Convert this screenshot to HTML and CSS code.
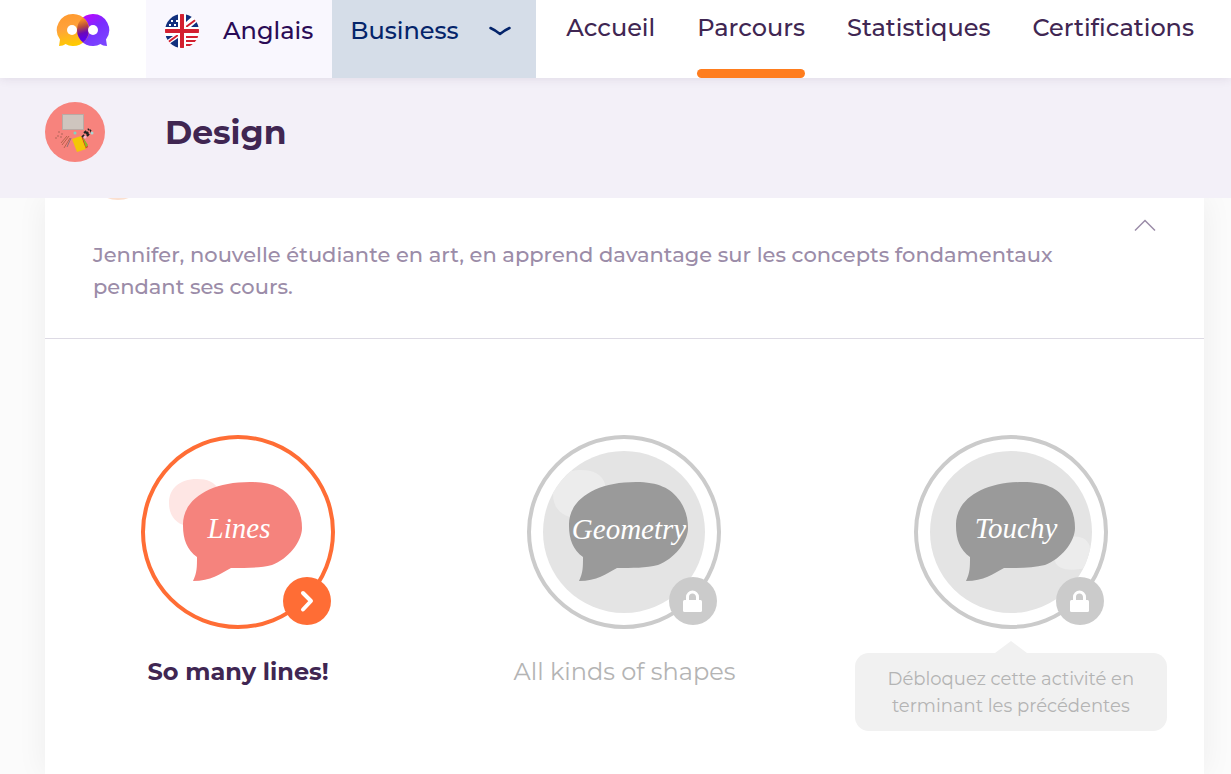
FILE: index.html
```html
<!DOCTYPE html>
<html lang="fr">
<head>
    <meta charset="utf-8">
    <meta name="viewport" content="width=device-width, initial-scale=1">
    <title>Parcours - Design</title>
    <link rel="stylesheet" href="styles.css">
</head>
<body>
    <header class="topbar">
        <a href="#" class="logo" aria-label="Accueil">
            <svg width="54" height="34" viewBox="0 0 54 34">
                <defs>
                    <linearGradient id="orange" x1="0.2" y1="0" x2="0.4" y2="1">
                        <stop offset="0" stop-color="#ff9a2e"/>
                        <stop offset="0.45" stop-color="#ffa23c"/>
                        <stop offset="1" stop-color="#ffcb00"/>
                    </linearGradient>
                    <linearGradient id="purple" x1="0.2" y1="0" x2="0.8" y2="0.9">
                        <stop offset="0" stop-color="#c400ff"/>
                        <stop offset="0.5" stop-color="#7a2cff"/>
                        <stop offset="1" stop-color="#7a44ff"/>
                    </linearGradient>
                    <linearGradient id="overlap" gradientUnits="userSpaceOnUse" x1="23" y1="6" x2="29" y2="26">
                        <stop offset="0" stop-color="#ff9a20"/>
                        <stop offset="0.4" stop-color="#b84a3c"/>
                        <stop offset="0.7" stop-color="#6a08b8"/>
                        <stop offset="1" stop-color="#5c00f0"/>
                    </linearGradient>
                </defs>
                <path fill="url(#purple)" d="M37 1a16 16 0 0 1 13 25.500l1 6.500c-3 0-5-1-6.500-2A16 16 0 1 1 37 1z"/>
                <path fill="url(#orange)" d="M17 1a16 16 0 1 1-7.500 30c-1.500 1-3.500 2-6.500 2l1-6.500A16 16 0 0 1 17 1z"/>
                <path fill="url(#overlap)" d="M27 4.500A16 16 0 0 1 27 29.500A16 16 0 0 1 27 4.500z"/>
                <circle cx="16" cy="17" r="5" fill="#fff"/>
                <circle cx="37" cy="17" r="5" fill="#fff"/>
            </svg>
        </a>
        <button type="button" class="language">
            <svg width="34" height="34" viewBox="0 0 34 34">
                <clipPath id="round"><circle cx="17" cy="17" r="17"/></clipPath>
                <g clip-path="url(#round)">
                    <path fill="#fff" d="M0 0h34v34H0z"/>
                    <path fill="#12307e" d="M0 0h13v13H0zM21 0h9l-9 8zM0 22h8l-7 5zM13 24v10H4v-4z"/>
                    <path stroke="#d32030" stroke-width="2" d="M21 13L33 4M2 29l11-8"/>
                    <path fill="#12307e" d="M34 6v7h-8z"/>
                    <path stroke="#d32030" stroke-width="2" d="M21 23h13M21 27h13M21 31h10"/>
                    <path stroke="#fff" stroke-width="2" stroke-dasharray="2 3" d="M4 11h9M6 7h7"/>
                    <path fill="#fff" d="M13 0h8v34h-8zM0 13h34v8H0z"/>
                    <path fill="#d32030" d="M15 0h4v34h-4zM0 15h34v4H0z"/>
                </g>
            </svg>
            <span>Anglais</span>
        </button>
        <div class="theme">
            <select class="theme-select" aria-label="Thème">
                <option>Business</option>
            </select>
            <svg class="theme-arrow" width="22" height="10" viewBox="0 0 22 10" fill="none" stroke="#04246a" stroke-width="2.500" stroke-linecap="round" stroke-linejoin="round"><path d="M1.500 2Q6 4 11 8Q16 4 20.500 2"/></svg>
        </div>
        <nav class="menu">
            <a href="#">Accueil</a>
            <a href="#" class="active">Parcours</a>
            <a href="#">Statistiques</a>
            <a href="#">Certifications</a>
        </nav>
    </header>

    <div class="chapter">
        <svg width="60" height="60" viewBox="0 0 60 60">
            <circle cx="30" cy="30" r="30" fill="#f7837d"/>
            <path fill="#b9aaa4" d="M17 12h22v16H17z"/>
            <path fill="#cec5be" d="M18 13h20v14H18z"/>
            <path fill="#e32526" d="M36 34l3 3 4 8-3 2z"/>
            <path fill="#86b925" d="M37 34l6 9-2 3z"/>
            <path fill="#f4c707" d="M27 37l9-3 5 13-9 3z"/>
            <path stroke="#b8634c" d="M24 34l-7 9M25 36l-6 10M22 34l-6 7"/>
            <path stroke="#916d78" d="M26 36l-4 9"/>
            <path stroke="#222" stroke-width="2" stroke-dasharray="3 2" d="M37 35l9-7M39 31l5-4M42 34l4-4"/>
            <circle cx="30" cy="31" r="1.500" fill="#81d4c0"/>
            <circle cx="47" cy="31" r="1.500" fill="#a8d8d4"/>
            <circle cx="40" cy="35" r="1.500" fill="#f3b6d0"/>
            <g fill="#c96f66"><circle cx="14" cy="30" r="1"/><circle cx="17" cy="32" r="1"/><circle cx="13" cy="34" r="1"/><circle cx="16" cy="35" r="1"/><circle cx="11" cy="36" r="1"/></g>
        </svg>
        <h1>Design</h1>
    </div>

    <main class="page">
        <section class="panel">
            <div class="panel-header">
                <span class="panel-dot"></span>
                <p>Jennifer, nouvelle étudiante en art, en apprend davantage sur les concepts fondamentaux pendant ses cours.</p>
                <button type="button" class="toggle" aria-label="Réduire">
                    <svg width="22" height="14" viewBox="0 0 22 14" fill="none" stroke="#9b8ca8" stroke-width="1.500"><path d="M1 11.500L11 1.500l10 10"/></svg>
                </button>
            </div>

            <div class="activities">
                <button type="button" class="activity">
                    <svg class="medal" width="194" height="194" viewBox="0 0 194 194">
                        <defs>
                            <path id="bubble" d="M56 122C46 115 42 104 42 91C41 65 68 47 109 47C131 47 144 53 153 66C159 75 161 84 161 93C161 107 147 124 131 130C119 133 105 133 90 133C79 139 70 146 52 146C56 138 56 132 56 122z"/>
                            <g id="lock">
                                <circle cx="166" cy="166" r="24" fill="#cbcbcb"/>
                                <rect x="156" y="165" width="19" height="12" rx="1.500" fill="#fff"/>
                                <path d="M160.500 166v-4a5 5 0 0 1 10 0v4" fill="none" stroke="#fff" stroke-width="3"/>
                            </g>
                            <clipPath id="disc"><circle cx="97" cy="97" r="81"/></clipPath>
                        </defs>
                        <circle cx="97" cy="97" r="95" fill="#fff" stroke="#ff6d35" stroke-width="4"/>
                        <path fill="#fee6e4" d="M28 68C28 54 38 44 56 44C66 44 74 47 78 55C82 66 58 95 45 91C34 88 28 80 28 68z"/>
                        <use href="#bubble" fill="#f5837d"/>
                        <text class="word" x="98" y="103">Lines</text>
                        <circle cx="166" cy="166" r="24" fill="#ff6d35"/>
                        <path d="M162 158l8 8-8 8.500" fill="none" stroke="#fff" stroke-width="4" stroke-linecap="round" stroke-linejoin="round"/>
                    </svg>
                    <span class="name">So many lines!</span>
                </button>

                <button type="button" class="activity locked" disabled>
                    <svg class="medal" width="194" height="194" viewBox="0 0 194 194">
                        <circle cx="97" cy="97" r="95" fill="#fff" stroke="#cbcbcb" stroke-width="4"/>
                        <circle cx="97" cy="97" r="81" fill="#e4e4e4"/>
                        <path clip-path="url(#disc)" fill="#ececec" d="M26 59C26 45 36 35 54 35C66 35 75 39 78 49C80 58 56 86 43 82C32 79 26 71 26 59z"/>
                        <use href="#bubble" fill="#9a9a9a"/>
                        <text class="word" x="102" y="104">Geometry</text>
                        <use href="#lock"/>
                    </svg>
                    <span class="name">All kinds of shapes</span>
                </button>

                <div class="activity-cell">
                    <button type="button" class="activity locked" disabled aria-describedby="hint">
                        <svg class="medal" width="194" height="194" viewBox="0 0 194 194">
                            <circle cx="97" cy="97" r="95" fill="#fff" stroke="#cbcbcb" stroke-width="4"/>
                            <circle cx="97" cy="97" r="81" fill="#e4e4e4"/>
                            <path clip-path="url(#disc)" fill="#ececec" d="M156 102C168 100 176 106 176 114C175 124 174 134 166 134C154 136 143 134 141 126C140 118 150 103 156 102z"/>
                            <use href="#bubble" fill="#9a9a9a"/>
                            <text class="word" x="102" y="103">Touchy</text>
                            <use href="#lock"/>
                        </svg>
                    </button>
                    <p class="hint" id="hint">Débloquez cette activité en terminant les précédentes</p>
                </div>
            </div>
        </section>
    </main>
</body>
</html>
```
FILE: styles.css
```css
* {
    box-sizing: border-box;
}

body {
    font-family: Montserrat, Inter, sans-serif;
    margin: 0;
    min-height: 100vh;
    display: flex;
    flex-direction: column;
    background-color: #fbfbfb;
    color: #402652;
}

button {
    font-family: inherit;
    color: inherit;
    border: none;
    background: none;
    padding: 0;
    cursor: pointer;
}

button:disabled {
    cursor: default;
}

svg {
    display: block;
    flex-shrink: 0;
}

.topbar {
    display: flex;
    height: 78px;
    background-color: #fff;
    box-shadow: 0 0 10px rgba(64, 38, 82, 0.12);
    position: relative;
    z-index: 2;
}

.logo {
    padding: 13px 36px 0 56px;
}

.language {
    display: flex;
    align-items: center;
    gap: 24px;
    padding: 0 19px 17px 19px;
    background-color: #f9f7fe;
    color: #2a0b56;
    font-size: 24px;
    font-weight: 500;
    line-height: 32px;
}

.theme {
    display: flex;
    align-items: center;
    gap: 30px;
    padding: 0 25px 17px 18px;
    background-color: #d5dde8;
}

.theme-select {
    appearance: none;
    border: none;
    padding: 0;
    background: none;
    font-family: inherit;
    font-size: 24px;
    font-weight: 500;
    line-height: 32px;
    color: #04246a;
}

.menu {
    display: flex;
    flex: 1;
    justify-content: space-between;
    padding: 0 37px 0 30px;
}

.menu a {
    padding-top: 12px;
    color: #402652;
    font-size: 24px;
    font-weight: 500;
    line-height: 32px;
    text-decoration: none;
}

.menu .active {
    display: flex;
    flex-direction: column;
    justify-content: space-between;
}

.menu .active::after {
    content: "";
    height: 9px;
    border-radius: 5px;
    background-color: #ff7d1e;
}

.chapter {
    display: flex;
    align-items: flex-start;
    gap: 60px;
    height: 120px;
    padding: 24px 45px;
    background-color: #f3f0f8;
    position: relative;
    z-index: 1;
}

h1 {
    margin: 0;
    font-size: 33px;
    line-height: 60px;
    font-weight: bold;
}

.page {
    display: flex;
    flex: 1;
    padding: 0 27px 0 45px;
}

.panel {
    flex: 1;
    background-color: #fff;
    box-shadow: 0 0 30px rgba(0, 0, 0, 0.06);
}

.panel-header {
    display: flex;
    align-items: flex-start;
    justify-content: space-between;
    padding: 21px 48px 35px;
    border-bottom: 1px solid #dddae4;
    position: relative;
}

.panel-dot {
    position: absolute;
    top: -58px;
    left: 43px;
    width: 60px;
    height: 60px;
    border-radius: 50%;
    background-color: #fbe0d0;
}

.panel-header p {
    margin: 20px 0 0;
    max-width: 980px;
    color: #9b8ca8;
    font-size: 21px;
    font-weight: 500;
    line-height: 32px;
}

.activities {
    display: grid;
    grid-template-columns: repeat(3, 1fr);
    align-items: start;
    padding: 96px 0 43px;
}

.activity {
    display: flex;
    flex-direction: column;
    align-items: center;
    gap: 27px;
}

.activity-cell {
    display: flex;
    flex-direction: column;
    align-items: center;
    gap: 24px;
}

.word {
    font-family: Satisfy, "Liberation Serif", serif;
    font-style: italic;
    font-size: 29px;
    text-anchor: middle;
    fill: #fff;
}

.name {
    font-size: 24px;
    line-height: 32px;
    font-weight: bold;
}

.locked .name {
    color: #b4b4b4;
    font-weight: normal;
}

.hint {
    position: relative;
    width: 312px;
    margin: 0;
    padding: 13px 24px 11px;
    border-radius: 14px;
    background-color: #f1f1f1;
    color: #b4b4b4;
    font-size: 18px;
    line-height: 27px;
    text-align: center;
}

.hint::before {
    content: "";
    position: absolute;
    top: -12px;
    left: 50%;
    margin-left: -16px;
    border: 16px solid transparent;
    border-top: none;
    border-bottom: 12px solid #f1f1f1;
}
```
